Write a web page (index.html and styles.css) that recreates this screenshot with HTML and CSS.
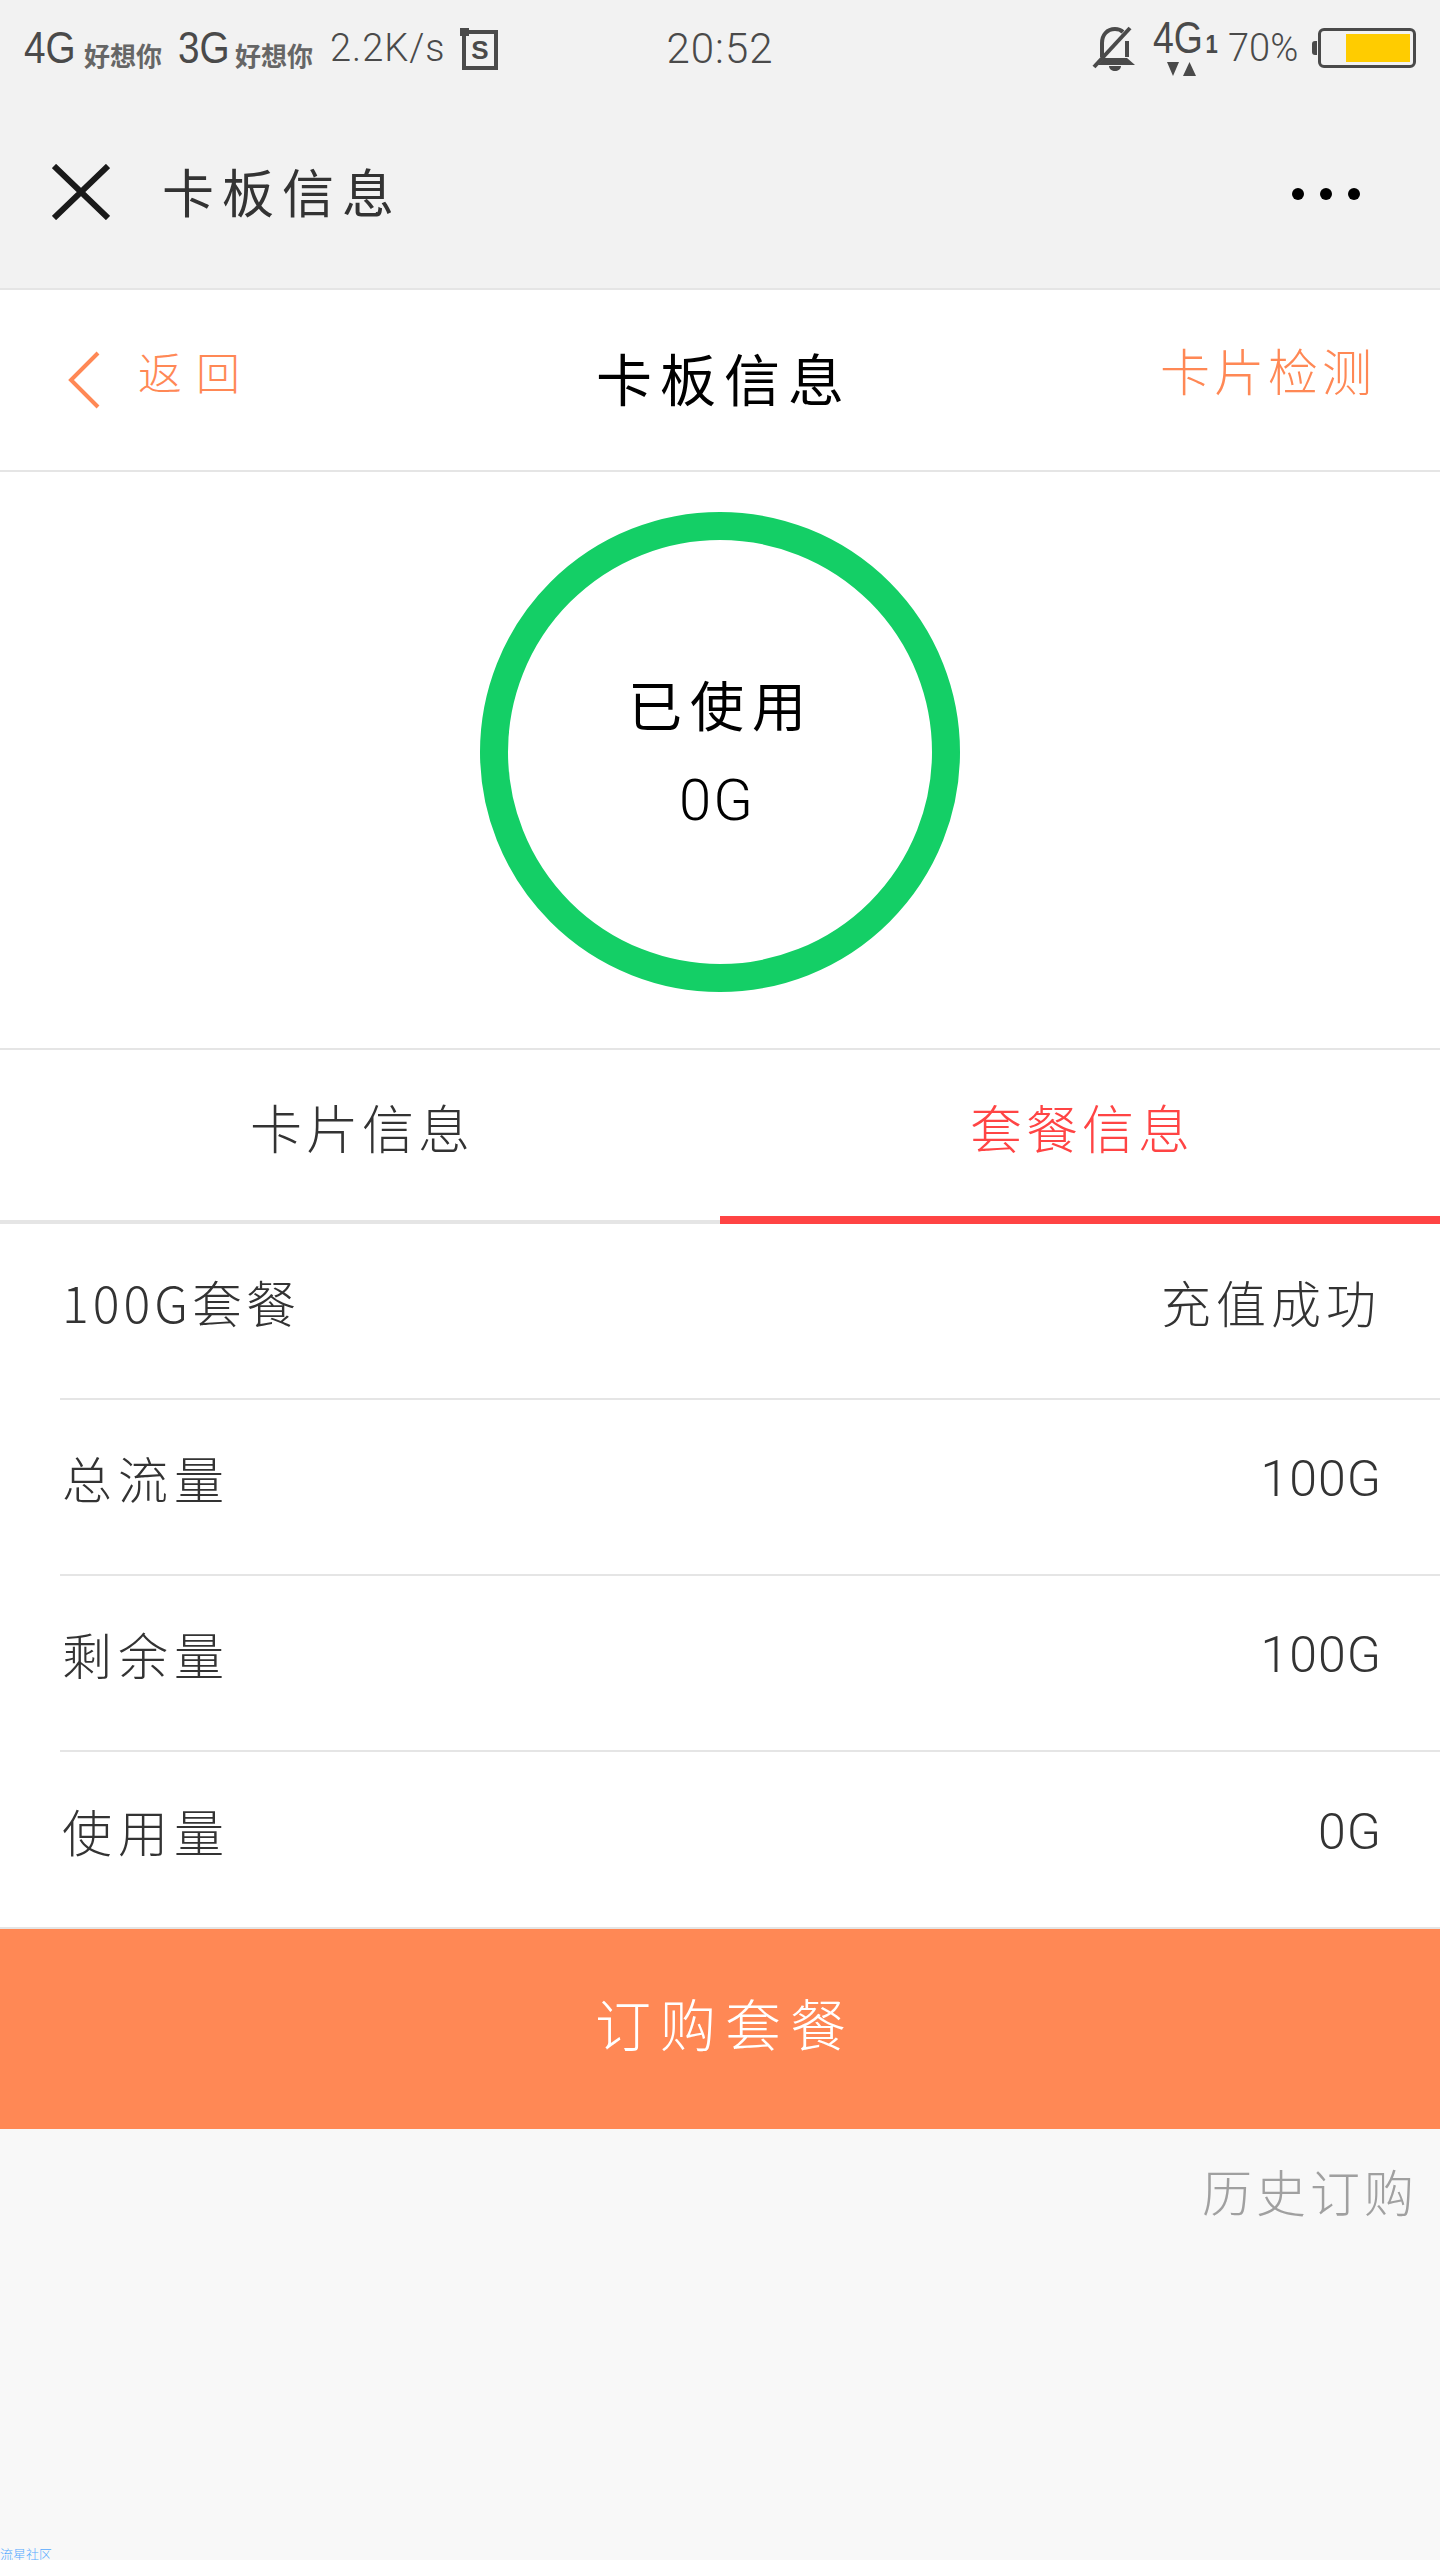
FILE: index.html
```html
<!DOCTYPE html>
<html lang="zh-CN">
<head>
  <meta charset="UTF-8" />
  <title>卡板信息</title>
  <link rel="stylesheet" href="styles.css">
</head>
<body>
  <div class="top">
    <div class="status">
      <div class="status-left">
        <span class="net">4G</span>
        <span class="carrier">好想你</span>
        <span class="net net-second">3G</span>
        <span class="carrier">好想你</span>
        <span class="speed">2.2K/s</span>
        <svg class="s-icon" width="38" height="42" viewBox="0 0 38 42">
          <path d="M1 2h6v4h-6z M4 4h32v36h-32z" fill="none" stroke="#4a4a4a" stroke-width="4"/>
          <text x="20" y="31" text-anchor="middle" class="s-text">S</text>
        </svg>
      </div>
      <div class="time">20:52</div>
      <div class="status-right">
        <svg width="46" height="46" viewBox="0 0 46 46">
          <path d="M10 32V18C10 10 15 4 23 4c3 0 6 1 8 3M35 16v16" fill="none" stroke="#4a4a4a" stroke-width="4"/>
          <path d="M12 33h23l8 7H6z" fill="#4a4a4a"/>
          <path d="M17 41h12c0 3-3 5-6 5s-6-2-6-5z" fill="#4a4a4a"/>
          <path d="M2 42L38 3" stroke="#4a4a4a" stroke-width="4"/>
        </svg>
        <div class="sig">
          <div class="sig-text">4G<span class="sig-sim">1</span></div>
          <svg width="30" height="14" viewBox="0 0 30 14">
            <path d="M1 0h12l-6 14z M17 14h13l-6.500-14z" fill="#4a4a4a"/>
          </svg>
        </div>
        <span class="pct">70%</span>
        <div class="battery-nub"></div>
        <div class="battery"><div class="battery-fill"></div></div>
      </div>
    </div>
    <div class="nav">
      <svg width="58" height="56" viewBox="0 0 58 56">
        <path d="M2 2L56 54M56 2L2 54" stroke="#1a1a1a" stroke-width="6"/>
      </svg>
      <div class="nav-title">卡板信息</div>
      <div class="dots"><i></i><i></i><i></i></div>
    </div>
  </div>

  <div class="header">
    <div class="back">
      <svg width="32" height="58" viewBox="0 0 32 58">
        <path d="M30 2L3 29l27 27" fill="none" stroke="#ff8855" stroke-width="4"/>
      </svg>
      <span class="back-text">返回</span>
    </div>
    <div class="header-title">卡板信息</div>
    <div class="check">卡片检测</div>
  </div>

  <div class="usage">
    <div class="ring">
      <div class="ring-label">已使用</div>
      <div class="ring-value">0G</div>
    </div>
  </div>

  <div class="tabs">
    <div class="tab">卡片信息</div>
    <div class="tab active">套餐信息</div>
  </div>

  <div class="list">
    <div class="row"><span class="name name-plan">100G套餐</span><span class="val">充值成功</span></div>
    <div class="row"><span class="name">总流量</span><span class="val num">100G</span></div>
    <div class="row"><span class="name">剩余量</span><span class="val num">100G</span></div>
    <div class="row"><span class="name">使用量</span><span class="val num">0G</span></div>
  </div>

  <div class="buy">订购套餐</div>
  <div class="history">历史订购</div>
  <div class="mark">流星社区</div>
</body>
</html>
```

FILE: styles.css
```css
* {
  box-sizing: border-box;
}
body {
  margin: 0;
  height: 2560px;
  display: flex;
  flex-direction: column;
  background: #f8f8f8;
  color: #333;
  font-family: "Noto Sans CJK SC", "Noto Sans", sans-serif;
  font-weight: 300;
  overflow: hidden;
}
.top {
  height: 290px;
  background: #f2f2f2;
  border-bottom: 2px solid #e5e5e5;
}
.status {
  height: 72px;
  padding: 20px 24px 0 24px;
  display: grid;
  grid-template-columns: 1fr auto 1fr;
  align-items: center;
  color: #4a4a4a;
}
.status-left {
  display: flex;
  align-items: center;
}
.status-right {
  display: flex;
  align-items: center;
  justify-content: flex-end;
}
.net {
  font-family: "Liberation Sans", sans-serif;
  font-size: 44px;
  line-height: 44px;
  width: 60px;
  transform: scaleX(0.88);
  transform-origin: left center;
}
.net-second {
  width: 57px;
  margin-left: 18px;
}
.carrier {
  font-size: 26px;
  line-height: 30px;
  font-weight: 700;
  width: 76px;
  margin-top: 14px;
  color: #666;
  white-space: nowrap;
}
.speed {
  font-family: Roboto, sans-serif;
  font-weight: 300;
  font-size: 38px;
  letter-spacing: 1px;
  margin-left: 19px;
  width: 112px;
  white-space: nowrap;
}
.s-icon {
  margin-left: 18px;
  margin-top: 2px;
}
.s-text {
  font-family: "Liberation Sans", sans-serif;
  font-size: 26px;
  font-weight: 700;
  fill: #4a4a4a;
}
.time {
  font-family: Roboto, sans-serif;
  font-weight: 300;
  font-size: 42px;
  letter-spacing: 1px;
}
.sig {
  margin-left: 15px;
  width: 62px;
  display: flex;
  flex-direction: column;
  align-items: flex-start;
}
.sig svg {
  margin-left: 13px;
}
.sig-text {
  font-family: "Liberation Sans", sans-serif;
  font-size: 44px;
  line-height: 36px;
  white-space: nowrap;
  transform: scaleX(0.85);
  transform-origin: left center;
}
.sig-sim {
  font-size: 26px;
  font-weight: 700;
  margin-left: 3px;
}
.pct {
  font-family: Roboto, sans-serif;
  font-weight: 300;
  font-size: 38px;
  margin-left: 13px;
  width: 84px;
}
.battery-nub {
  width: 5px;
  height: 14px;
  background: #4a4a4a;
  border-radius: 3px 0 0 3px;
}
.battery {
  width: 98px;
  height: 40px;
  margin-left: 1px;
  padding: 3px;
  border: 3px solid #4a4a4a;
  border-radius: 6px;
  display: flex;
  justify-content: flex-end;
}
.battery-fill {
  width: 64px;
  background: #ffcc00;
}
.nav {
  height: 216px;
  padding: 24px 80px 0 52px;
  display: flex;
  align-items: center;
}
.nav-title {
  margin-left: 52px;
  margin-bottom: 4px;
  font-size: 52px;
  font-weight: 400;
  letter-spacing: 8px;
  color: #333;
}
.dots {
  margin-left: auto;
  margin-top: 4px;
  display: flex;
  gap: 16px;
}
.dots i {
  width: 12px;
  height: 12px;
  background: #000;
  border-radius: 50%;
}
.header {
  height: 182px;
  background: #fff;
  border-bottom: 2px solid #e5e5e5;
  padding: 0 68px 0 68px;
  display: grid;
  grid-template-columns: 1fr auto 1fr;
  align-items: center;
}
.back {
  display: flex;
  align-items: center;
  color: #ff8855;
}
.back-text {
  margin-left: 38px;
  margin-bottom: 18px;
  font-size: 44px;
  letter-spacing: 14px;
}
.header-title {
  font-size: 56px;
  font-weight: 400;
  letter-spacing: 8px;
  margin-right: -8px;
  margin-bottom: 8px;
  color: #000;
}
.check {
  justify-self: end;
  margin-right: -4px;
  margin-bottom: 22px;
  font-size: 50px;
  letter-spacing: 4px;
  color: #ff8855;
}
.usage {
  height: 576px;
  background: #fff;
  padding-top: 40px;
  display: flex;
  justify-content: center;
}
.ring {
  width: 480px;
  height: 480px;
  border: 28px solid #14cf66;
  border-radius: 50%;
  color: #000;
  display: flex;
  flex-direction: column;
  align-items: center;
  justify-content: center;
}
.ring-label {
  font-size: 54px;
  font-weight: 400;
  line-height: 60px;
  letter-spacing: 8px;
  margin-right: -2px;
}
.ring-value {
  margin-top: 36px;
  margin-right: 6px;
  font-family: Roboto, sans-serif;
  font-weight: 300;
  font-size: 58px;
  line-height: 60px;
  letter-spacing: 2px;
}
.tabs {
  height: 176px;
  background: #fff;
  border-top: 2px solid #e5e5e5;
  border-bottom: 4px solid #e5e5e5;
  display: grid;
  grid-template-columns: 1fr 1fr;
}
.tab {
  display: flex;
  align-items: center;
  justify-content: center;
  padding-bottom: 22px;
  padding-left: 4px;
  font-size: 52px;
  letter-spacing: 4px;
  color: #333;
}
.tab.active {
  color: #ff4444;
  height: 174px;
  padding-bottom: 14px;
  border-bottom: 8px solid #ff4444;
}
.list {
  background: #fff;
  border-bottom: 2px solid #e5e5e5;
}
.row {
  height: 176px;
  margin-left: 60px;
  padding: 0 58px 20px 2px;
  border-bottom: 2px solid #e5e5e5;
  display: flex;
  align-items: center;
  justify-content: space-between;
  font-size: 50px;
  color: #333;
}
.row:last-child {
  height: 175px;
  border-bottom: none;
}
.name {
  letter-spacing: 6px;
}
.name-plan {
  letter-spacing: 4px;
}
.val {
  letter-spacing: 5px;
  margin-right: 1px;
}
.row .num {
  font-family: Roboto, sans-serif;
  font-weight: 300;
  font-size: 50px;
  letter-spacing: 1px;
  margin-right: 0;
  margin-top: 4px;
}
.buy {
  height: 200px;
  background: #ff8855;
  color: #fff;
  display: flex;
  align-items: center;
  justify-content: center;
  padding: 0 0 16px 10px;
  font-size: 56px;
  letter-spacing: 9px;
}
.history {
  padding: 25px 22px 0 0;
  text-align: right;
  font-size: 50px;
  letter-spacing: 4px;
  color: #a0a0a0;
}
.mark {
  margin-top: auto;
  font-size: 13px;
  line-height: 12px;
  color: #55aaff;
}
```
